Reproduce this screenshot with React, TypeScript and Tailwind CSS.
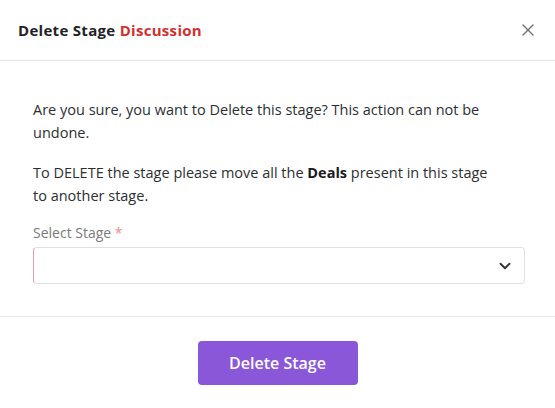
import React from 'react';
import { X, ChevronDown } from 'lucide-react';

export default function App() {
  return (
    <div className="w-[555px] h-[408px] bg-white flex flex-col font-['Open_Sans',sans-serif] text-[#212529]">
      {/* header */}
      <div className="h-[61px] flex items-center justify-between pl-[18px] pr-[17px] border-b border-[#e3e6ea]">
        <h2 className="text-[15px] tracking-[0.3px] font-bold text-[#1f2328]">
          Delete Stage <span className="text-[#d32f2f]">Discussion</span>
        </h2>
        <X className="w-[20px] h-[20px] text-[#6c6f75]" strokeWidth={1.6} />
      </div>

      {/* body */}
      <div className="flex flex-col pl-[33px] pr-[30px] pt-[37px] h-[256px] border-b border-[#e9e9ec] text-[14.5px] leading-[23px] text-[#2b2f33]">
        <p className="pr-[20px]">Are you sure, you want to Delete this stage? This action can not be undone.</p>
        <p className="mt-[17px] pr-[25px]">
          To DELETE the stage please move all the <b className="text-[#1a1a1a]">Deals</b> present in this stage to another stage.
        </p>
        <label className="mt-[14px] text-[14px] text-[#7a7a7a]">
          Select Stage <span className="text-[#f08a8a]">*</span>
        </label>
        <div className="mt-[3px] h-[37px] rounded-[4px] border border-[#dfe1e6] border-l-[#e8a0a8] flex items-center justify-end pr-[10px]">
          <ChevronDown className="w-[18px] h-[18px] text-[#333]" strokeWidth={2.5} />
        </div>
      </div>

      {/* footer */}
      <div className="flex-1 flex justify-center pt-[24px]">
        <button className="w-[160px] h-[44px] rounded-[4px] bg-[#8b57d9] text-white text-[16px] font-semibold">
          Delete Stage
        </button>
      </div>
    </div>
  );
}
